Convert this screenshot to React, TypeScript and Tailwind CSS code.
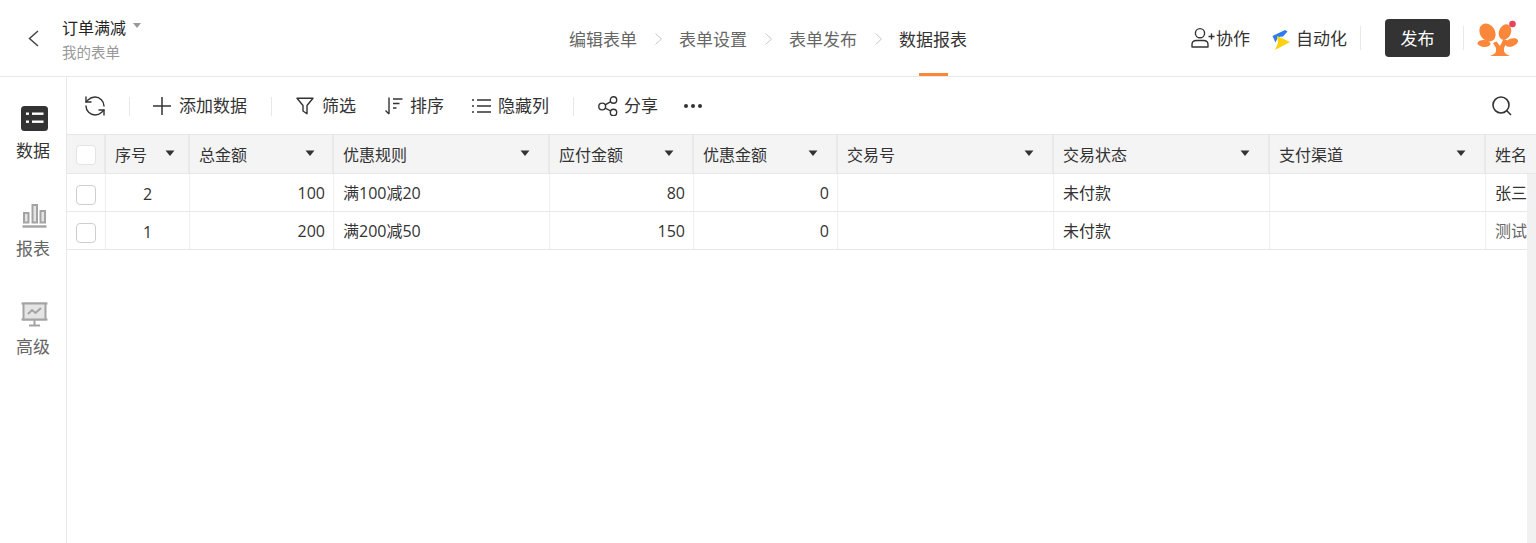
import { RefreshCcw } from "lucide-react";

const font = "font-['Open_Sans','Noto_Sans_CJK_SC',sans-serif]";

const columns = [
  { name: "序号", width: "w-[84px]", pad: "pr-[13px]" },
  { name: "总金额", width: "w-[144px]", pad: "pr-[17px]" },
  { name: "优惠规则", width: "w-[216px]", pad: "pr-[18px]" },
  { name: "应付金额", width: "w-[144px]", pad: "pr-[18px]" },
  { name: "优惠金额", width: "w-[144px]", pad: "pr-[18px]" },
  { name: "交易号", width: "w-[216px]", pad: "pr-[18px]" },
  { name: "交易状态", width: "w-[216px]", pad: "pr-[18px]" },
  { name: "支付渠道", width: "w-[216px]", pad: "pr-[18px]" },
];

const rows = [
  { id: "2", total: "100", rule: "满100减20", pay: "80", off: "0", status: "未付款", name: "张三", nameColor: "text-[#333]" },
  { id: "1", total: "200", rule: "满200减50", pay: "150", off: "0", status: "未付款", name: "测试", nameColor: "text-[#666]" },
];

function Logo() {
  return (
    <svg width="42" height="37" viewBox="0 0 42 37" className="block">
      <g fill="#fb873b">
        <ellipse cx="10.5" cy="12.5" rx="7.5" ry="9.5" transform="rotate(-32 10.5 12.5)" />
        <ellipse cx="28" cy="12" rx="6" ry="8" transform="rotate(22 28 12)" />
        <ellipse cx="7" cy="23.5" rx="6.5" ry="3.4" transform="rotate(5 7 23.5)" />
        <ellipse cx="34.5" cy="22.5" rx="6.8" ry="3.9" transform="rotate(-20 34.5 22.5)" />
        <path d="M16 23 L19.5 21.5 L23 26 L26.5 19 L30.5 20.5 L27 28 V31 C27.5 33 30 35 33 36 H13 C16 35 19 33 19 31 V28 Z" />
      </g>
      <circle cx="35.5" cy="4" r="3.3" fill="#e8435a" />
    </svg>
  );
}

function UserPlus() {
  return (
    <svg width="24" height="22" viewBox="0 0 24 22" fill="none" stroke="#333" strokeWidth="1.4" className="block">
      <circle cx="9" cy="6.2" r="4.6" />
      <path d="M1 20 v-2.5 c0-2.5 2-4 4.5-4 h7 c2.5 0 4.5 1.5 4.5 4 V20 Z" strokeLinejoin="round" />
      <path d="M17.5 9.5 h6 M20.5 6.5 v6" />
    </svg>
  );
}

function AutoIcon() {
  return (
    <svg width="18" height="24" viewBox="0 0 18 24" className="block">
      <path d="M0.5 10 L13 4 L15.5 5.5 L11 10.5 L6 11 L3.5 16.5 Z" fill="#2f7cf0" />
      <path d="M5 10 L18 16 L3 24 L6 17 Z" fill="#fbd20d" />
    </svg>
  );
}

function DataIcon() {
  return (
    <svg width="27" height="25" viewBox="0 0 27 25" className="block">
      <rect width="27" height="25" rx="3.5" fill="#333" />
      <g fill="#fff">
        <rect x="5" y="6.5" width="3" height="2.4" />
        <rect x="5" y="14.5" width="3" height="2.4" />
        <rect x="11" y="6.5" width="11.5" height="2.4" />
        <rect x="11" y="14.5" width="11.5" height="2.4" />
      </g>
    </svg>
  );
}

function ChartIcon() {
  return (
    <svg width="25" height="26" viewBox="0 0 25 26" fill="none" stroke="#a3a3a3" strokeWidth="2" className="block">
      <rect x="2" y="10" width="4.5" height="9.5" fill="#e4e4e4" />
      <rect x="10.5" y="2" width="4.5" height="17.5" fill="#e4e4e4" />
      <rect x="18.5" y="8" width="4.5" height="11.5" fill="#e4e4e4" />
      <path d="M0.5 23.5 H24.5" strokeWidth="2.4" />
    </svg>
  );
}

function BoardIcon() {
  return (
    <svg width="27" height="25" viewBox="0 0 27 25" fill="none" stroke="#a3a3a3" strokeWidth="2" className="block">
      <path d="M0.5 1.5 H26.5 M0.5 17.5 H26.5" />
      <rect x="2.5" y="1.5" width="22" height="16" fill="#e4e4e4" stroke="#a3a3a3" />
      <path d="M7 12 L11 8 L14.5 11 L20 6" />
      <path d="M13.5 18 V23 M8 23.5 H19" />
    </svg>
  );
}

function PlusIcon() {
  return (
    <svg width="18" height="18" viewBox="0 0 18 18" fill="none" stroke="#333" strokeWidth="1.5" className="block">
      <path d="M0 9 H18 M9 0 V18" />
    </svg>
  );
}

function FunnelIcon() {
  return (
    <svg width="18" height="18" viewBox="0 0 18 18" fill="none" stroke="#333" strokeWidth="1.4" strokeLinejoin="round" className="block">
      <path d="M1 1.2 H17 L11 8.5 V16.8 L7 14 V8.5 Z" />
    </svg>
  );
}

function SortIcon() {
  return (
    <svg width="19" height="18" viewBox="0 0 19 18" fill="none" stroke="#333" strokeWidth="1.4" className="block">
      <path d="M5 0.5 V17 M1.5 13.5 L5 17" />
      <path d="M9 2 H18.5 M9 6.5 H15.5 M9 11 H12.5" />
    </svg>
  );
}

function ListIcon() {
  return (
    <svg width="19" height="14" viewBox="0 0 19 14" fill="none" stroke="#333" strokeWidth="1.4" className="block">
      <path d="M0 1 H2 M0 7 H2 M0 13 H2 M5 1 H19 M5 7 H19 M5 13 H19" />
    </svg>
  );
}

function ShareIcon() {
  return (
    <svg width="20" height="20" viewBox="0 0 20 20" fill="none" stroke="#333" strokeWidth="1.4" className="block">
      <circle cx="4.2" cy="10.5" r="3.4" />
      <circle cx="15.5" cy="4" r="3.2" />
      <circle cx="15.5" cy="16.5" r="3.2" />
      <path d="M7.2 8.8 L12.7 5.6 M7.2 12.2 L12.7 15" />
    </svg>
  );
}

function DotsIcon() {
  return (
    <svg width="18" height="4" viewBox="0 0 18 4" fill="#333" className="block">
      <circle cx="2" cy="2" r="2" />
      <circle cx="9" cy="2" r="2" />
      <circle cx="16" cy="2" r="2" />
    </svg>
  );
}

function SearchIcon() {
  return (
    <svg width="20" height="20" viewBox="0 0 20 20" fill="none" stroke="#333" strokeWidth="1.6" className="block">
      <circle cx="9" cy="9" r="8" />
      <path d="M14.8 14.8 L19 19" />
    </svg>
  );
}

function BackIcon() {
  return (
    <svg width="11" height="17" viewBox="0 0 11 17" fill="none" stroke="#444" strokeWidth="1.5" className="block">
      <path d="M10 1 L1.5 8.5 L10 16" />
    </svg>
  );
}

function NavArrow() {
  return (
    <svg width="7" height="12" viewBox="0 0 7 12" fill="none" stroke="#c8c8c8" strokeWidth="1" className="mx-[17.5px] mb-[3px] block">
      <path d="M0.5 0.5 L6.5 6 L0.5 11.5" />
    </svg>
  );
}

function Caret() {
  return (
    <svg width="10" height="7" viewBox="0 0 10 7" className="block">
      <path d="M0.5 0.5 H9.5 L5 6 Z" fill="#333" />
    </svg>
  );
}

function Checkbox({ header }: { header?: boolean }) {
  return (
    <div
      className={`h-[20px] w-[20px] rounded-[4px] border-[1.5px] bg-white ${header ? "border-[#e4e4e4]" : "border-[#cfcfcf]"}`}
    />
  );
}

function TopBar() {
  return (
    <header className="flex h-[77px] items-center border-b border-[#e8e8e8] bg-white">
      <div className="flex w-[569px] shrink-0 items-center">
        <span className="ml-[28px]"><BackIcon /></span>
        <div className="ml-[23px] pt-[3px]">
          <div className="flex items-center gap-[7px] text-[16px] leading-[22px] text-[#222]">
            订单满减
            <svg width="8" height="5" viewBox="0 0 8 5" className="mb-[6px]">
              <path d="M0 0 H8 L4 5 Z" fill="#999" />
            </svg>
          </div>
          <div className="mt-[5px] text-[14.5px] leading-[18px] text-[#999]">我的表单</div>
        </div>
      </div>
      <nav className="flex h-full items-center pt-[4px] text-[17px] text-[#666]">
        <span>编辑表单</span>
        <NavArrow />
        <span>表单设置</span>
        <NavArrow />
        <span>表单发布</span>
        <NavArrow />
        <span className="relative flex h-full items-center text-[#333]">
          数据报表
          <span className="absolute bottom-0 left-[20px] h-[3px] w-[29px] bg-[#fb873b]" />
        </span>
      </nav>
      <div className="ml-auto flex items-center text-[17px] text-[#333]">
        <UserPlus />
        <span className="ml-[1px] mt-[2px]">协作</span>
        <span className="ml-[22px]"><AutoIcon /></span>
        <span className="ml-[6px] mt-[2px]">自动化</span>
        <span className="ml-[13px] h-[24px] w-px bg-[#e8e8e8]" />
        <button className="ml-[24px] h-[38px] w-[65px] rounded-[4px] bg-[#333] pt-[2px] text-[17px] text-white">发布</button>
        <span className="ml-[13px] h-[24px] w-px bg-[#e8e8e8]" />
        <span className="ml-[13px] mr-[17px]"><Logo /></span>
      </div>
    </header>
  );
}

function SideItem({ icon, label, active }: { icon: React.ReactNode; label: string; active?: boolean }) {
  return (
    <div className="flex h-[98px] flex-col items-center">
      <div className="ml-[3px] flex h-[26px] items-center">{icon}</div>
      <div className={`mt-[8px] text-[17px] leading-[24px] ${active ? "text-[#333]" : "text-[#666]"}`}>{label}</div>
    </div>
  );
}

function Toolbar() {
  return (
    <div className="flex h-[57px] shrink-0 items-center pt-[1px] text-[17px] text-[#333]">
      <RefreshCcw size={24} strokeWidth={1.4} className="ml-[16px]" />
      <span className="ml-[22px] h-[19px] w-px bg-[#e8e8e8]" />
      <span className="ml-[23px]"><PlusIcon /></span>
      <span className="ml-[8px]">添加数据</span>
      <span className="ml-[24px] h-[19px] w-px bg-[#e8e8e8]" />
      <span className="ml-[24px]"><FunnelIcon /></span>
      <span className="ml-[8px]">筛选</span>
      <span className="ml-[28px]"><SortIcon /></span>
      <span className="ml-[7px]">排序</span>
      <span className="ml-[28px]"><ListIcon /></span>
      <span className="ml-[7px]">隐藏列</span>
      <span className="ml-[24px] h-[19px] w-px bg-[#e8e8e8]" />
      <span className="ml-[24px]"><ShareIcon /></span>
      <span className="ml-[6px]">分享</span>
      <span className="ml-[26px]"><DotsIcon /></span>
      <span className="ml-auto mr-[24px]"><SearchIcon /></span>
    </div>
  );
}

function DataTable() {
  return (
    <div className="flex min-h-0 flex-1 flex-col overflow-hidden">
      <div className="flex h-[40px] shrink-0 border-y border-[#e8e8e8] bg-[#f4f4f4] text-[16px] text-[#333]">
        <div className="flex w-[39px] shrink-0 items-center justify-center border-r-2 border-[#e8e8e8] pt-[2px]">
          <Checkbox header />
        </div>
        {columns.map((col) => (
          <div
            key={col.name}
            className={`flex shrink-0 items-center justify-between border-r-2 border-[#e8e8e8] pl-[9px] pt-[2px] ${col.pad} ${col.width}`}
          >
            {col.name}
            <span className="mb-[3px]"><Caret /></span>
          </div>
        ))}
        <div className="flex flex-1 items-center whitespace-nowrap pl-[9px] pt-[2px]">姓名</div>
      </div>
      <div className="flex min-h-0 flex-1">
        <div className="min-w-0 flex-1 overflow-hidden">
          {rows.map((row) => (
            <div key={row.id} className="flex h-[38px] border-b border-[#e8e8e8] text-[16px] text-[#333]">
              <div className="flex w-[39px] shrink-0 items-center justify-center border-r border-[#eee] pt-[4px]">
                <Checkbox />
              </div>
              <div className="flex w-[84px] shrink-0 items-center justify-center border-r border-[#eee] pt-[3px]">{row.id}</div>
              <div className="flex w-[144px] shrink-0 items-center justify-end border-r border-[#eee] pr-[8px]">{row.total}</div>
              <div className="flex w-[216px] shrink-0 items-center border-r border-[#eee] pl-[9px]">{row.rule}</div>
              <div className="flex w-[144px] shrink-0 items-center justify-end border-r border-[#eee] pr-[8px]">{row.pay}</div>
              <div className="flex w-[144px] shrink-0 items-center justify-end border-r border-[#eee] pr-[8px]">{row.off}</div>
              <div className="w-[216px] shrink-0 border-r border-[#eee]" />
              <div className="flex w-[216px] shrink-0 items-center border-r border-[#eee] pl-[9px]">{row.status}</div>
              <div className="w-[216px] shrink-0 border-r border-[#eee]" />
              <div className={`flex flex-1 items-center overflow-hidden whitespace-nowrap pl-[9px] ${row.nameColor}`}>{row.name}</div>
            </div>
          ))}
        </div>
        <div className="w-[9px] shrink-0 bg-[#f1f1f1]" />
      </div>
    </div>
  );
}

export default function App() {
  return (
    <div className={`flex h-[543px] w-[1536px] flex-col overflow-hidden bg-white ${font}`}>
      <TopBar />
      <div className="flex min-h-0 flex-1">
        <aside className="w-[67px] shrink-0 border-r border-[#e8e8e8] pt-[28px]">
          <SideItem icon={<DataIcon />} label="数据" active />
          <SideItem icon={<ChartIcon />} label="报表" />
          <SideItem icon={<BoardIcon />} label="高级" />
        </aside>
        <main className="flex min-w-0 flex-1 flex-col">
          <Toolbar />
          <DataTable />
        </main>
      </div>
    </div>
  );
}
